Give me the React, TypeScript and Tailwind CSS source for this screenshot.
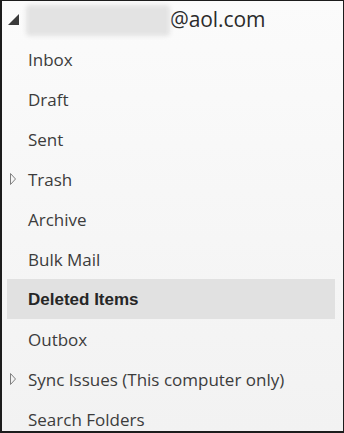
const folders = [
  { name: "Inbox" },
  { name: "Draft" },
  { name: "Sent" },
  { name: "Trash", expandable: true },
  { name: "Archive" },
  { name: "Bulk Mail" },
  { name: "Deleted Items", selected: true },
  { name: "Outbox" },
  { name: "Sync Issues (This computer only)", expandable: true },
  { name: "Search Folders" },
];

function CollapsedArrow() {
  return (
    <svg width="8" height="14" viewBox="0 0 8 14" className="absolute left-[2px] top-[13px]">
      <path d="M1.5 1.5 L6.5 7 L1.5 12.5 Z" fill="none" stroke="#808080" strokeWidth="1" />
    </svg>
  );
}

function ExpandedArrow() {
  return (
    <svg width="12" height="12" viewBox="0 0 12 12" className="shrink-0">
      <path d="M11 0 L11 11 L0 11 Z" fill="#3a3a3a" />
    </svg>
  );
}

export default function App() {
  return (
    <div
      className="w-[344px] h-[433px] overflow-hidden border-l-2 border-t border-b-2 border-r border-[#1c1c1c] bg-gradient-to-b from-[#fbfbfb] to-[#f2f2f2] text-[#333]"
      style={{ fontFamily: '"Open Sans", "Noto Sans", sans-serif' }}
    >
      {/* account header */}
      <div className="flex items-center h-[38px] pl-[6px]">
        <div className="mt-[-1px]">
          <ExpandedArrow />
        </div>
        <div className="ml-[6px] w-[144px] h-[31px] bg-[#e3e3e3] blur-[2px] rounded-sm" />
        <span className="text-[21px] leading-none tracking-[-0.1px] text-[#2b2b2b] -mt-[2px]">@aol.com</span>
      </div>

      {/* folders */}
      <div className="flex flex-col">
        {folders.map((f) => (
          <div
            key={f.name}
            className={
              "relative flex items-center h-[40px] pl-[21px] ml-[5px] mr-[8px] " +
              (f.selected ? "bg-[#e1e1e1]" : "")
            }
          >
            {f.expandable && <CollapsedArrow />}
            {f.selected ? (
              <span className="text-[17px] leading-none font-bold text-[#262626] font-['Liberation_Sans',sans-serif]">
                {f.name}
              </span>
            ) : (
              <span className="text-[17px] leading-none text-[#3c3c3c]">{f.name}</span>
            )}
          </div>
        ))}
      </div>
    </div>
  );
}
